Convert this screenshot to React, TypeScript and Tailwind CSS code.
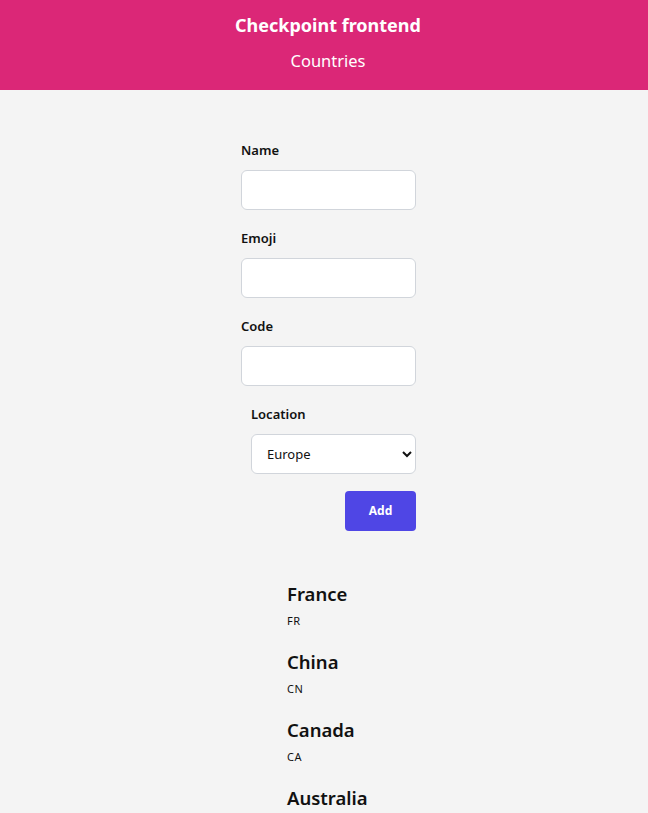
import { useState } from 'react';

type Country = { name: string; code: string };

const countries: Country[] = [
  { name: 'France', code: 'FR' },
  { name: 'China', code: 'CN' },
  { name: 'Canada', code: 'CA' },
  { name: 'Australia', code: 'AU' },
];

export default function App() {
  const [name, setName] = useState('');
  const [emoji, setEmoji] = useState('');
  const [code, setCode] = useState('');
  const [location, setLocation] = useState('Europe');

  return (
    <div className="min-h-screen bg-[#f4f4f4] font-['Segoe_UI','Noto_Sans',sans-serif] text-[#111]">
      <header className="flex h-[90px] flex-col items-center bg-[#db2777] pl-[8px] pt-[13px] text-white">
        <h1 className="text-[18px] font-bold leading-[24px]">Checkpoint frontend</h1>
        <p className="mt-[12px] text-[16.5px] leading-[24px]">Countries</p>
      </header>

      <main className="pt-[50px]">
        <form className="ml-[241px] flex w-[175px] flex-col" onSubmit={(e) => e.preventDefault()}>
          <label className="text-[13px] font-semibold leading-[20px]">Name</label>
          <input
            value={name}
            onChange={(e) => setName(e.target.value)}
            className="mt-[10px] h-[40px] rounded-md border border-[#d1d5db] bg-white px-3"
          />
          <label className="mt-[18px] text-[13px] font-semibold leading-[20px]">Emoji</label>
          <input
            value={emoji}
            onChange={(e) => setEmoji(e.target.value)}
            className="mt-[10px] h-[40px] rounded-md border border-[#d1d5db] bg-white px-3"
          />
          <label className="mt-[18px] text-[13px] font-semibold leading-[20px]">Code</label>
          <input
            value={code}
            onChange={(e) => setCode(e.target.value)}
            className="mt-[10px] h-[40px] rounded-md border border-[#d1d5db] bg-white px-3"
          />
          <div className="ml-[10px] flex flex-col">
            <label className="mt-[18px] text-[13px] font-semibold leading-[20px]">Location</label>
            <select
              value={location}
              onChange={(e) => setLocation(e.target.value)}
              className="mt-[10px] h-[40px] rounded-md border border-[#d1d5db] bg-white pl-[11px] pr-1 text-[13px]"
            >
              <option>Europe</option>
              <option>Asia</option>
              <option>America</option>
              <option>Africa</option>
              <option>Oceania</option>
            </select>
          </div>
          <button
            type="submit"
            className="mt-[17px] h-[40px] w-[71px] self-end rounded-[4px] bg-[#4f46e5] text-[12px] font-bold text-white"
          >
            Add
          </button>
        </form>

        <ul className="ml-[287px] mt-[50px] flex flex-col gap-[20px]">
          {countries.map((c) => (
            <li key={c.code} className="flex flex-col">
              <span className="text-[18.5px] font-semibold leading-[26px]">{c.name}</span>
              <span className="mt-[6px] text-[11px] leading-[16px] tracking-[0.5px]">{c.code}</span>
            </li>
          ))}
        </ul>
      </main>
    </div>
  );
}
